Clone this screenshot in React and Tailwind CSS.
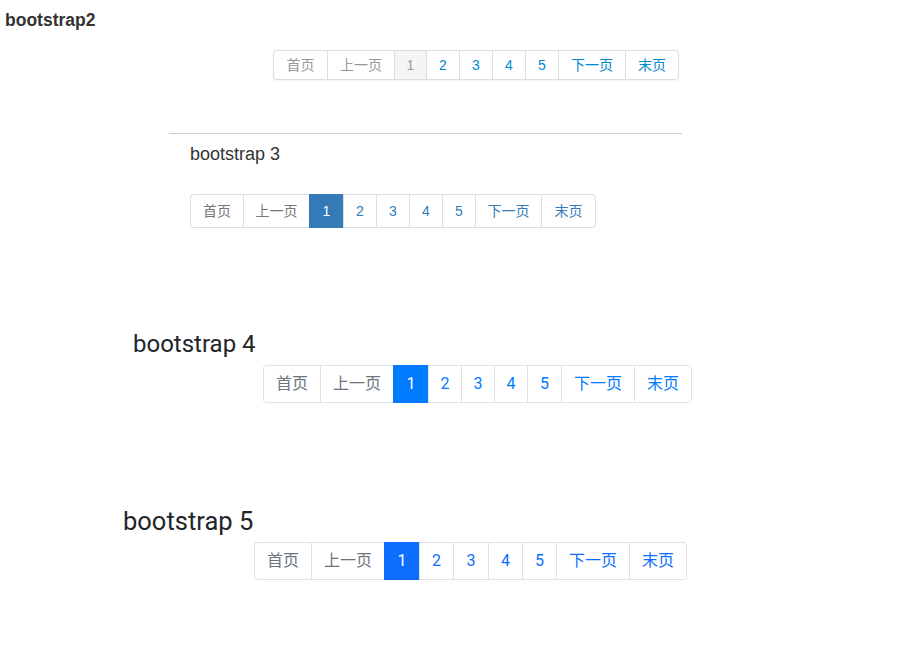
import React from "react";

const bs2 = [
  { t: "首页", w: "w-[54px]", c: "text-[#999999]" },
  { t: "上一页", w: "w-[67px]", c: "text-[#999999]" },
  { t: "1", w: "w-[32px]", c: "text-[#999999] bg-[#f5f5f5]" },
  { t: "2", w: "w-[33px]", c: "text-[#0088cc]" },
  { t: "3", w: "w-[33px]", c: "text-[#0088cc]" },
  { t: "4", w: "w-[33px]", c: "text-[#0088cc]" },
  { t: "5", w: "w-[33px]", c: "text-[#0088cc]" },
  { t: "下一页", w: "w-[67px]", c: "text-[#0088cc]" },
  { t: "末页", w: "w-[54px]", c: "text-[#0088cc]" },
];

const bs3 = [
  { t: "首页", w: "w-[53px]", c: "text-[#777777]" },
  { t: "上一页", w: "w-[66px]", c: "text-[#777777]" },
  { t: "1", w: "w-[34px]", c: "text-white bg-[#337ab7] !border-[#337ab7]" },
  { t: "2", w: "w-[33px]", c: "text-[#337ab7]" },
  { t: "3", w: "w-[33px]", c: "text-[#337ab7]" },
  { t: "4", w: "w-[33px]", c: "text-[#337ab7]" },
  { t: "5", w: "w-[33px]", c: "text-[#337ab7]" },
  { t: "下一页", w: "w-[66px]", c: "text-[#337ab7]" },
  { t: "末页", w: "w-[55px]", c: "text-[#337ab7]" },
];

const bs4 = [
  { t: "首页", w: "w-[57px]", c: "text-[#6c757d]" },
  { t: "上一页", w: "w-[73px]", c: "text-[#6c757d]" },
  { t: "1", w: "w-[35px]", c: "text-white bg-[#007bff] !border-[#007bff]" },
  { t: "2", w: "w-[33px]", c: "text-[#007bff]" },
  { t: "3", w: "w-[33px]", c: "text-[#007bff]" },
  { t: "4", w: "w-[33px]", c: "text-[#007bff]" },
  { t: "5", w: "w-[34px]", c: "text-[#007bff]" },
  { t: "下一页", w: "w-[73px]", c: "text-[#007bff]" },
  { t: "末页", w: "w-[58px]", c: "text-[#007bff]" },
];

const bs5 = [
  { t: "首页", w: "w-[57px]", c: "text-[#6c757d]" },
  { t: "上一页", w: "w-[73px]", c: "text-[#6c757d]" },
  { t: "1", w: "w-[35px]", c: "text-white bg-[#0d6efd] !border-[#0d6efd]" },
  { t: "2", w: "w-[34px]", c: "text-[#0d6efd]" },
  { t: "3", w: "w-[35px]", c: "text-[#0d6efd]" },
  { t: "4", w: "w-[34px]", c: "text-[#0d6efd]" },
  { t: "5", w: "w-[34px]", c: "text-[#0d6efd]" },
  { t: "下一页", w: "w-[73px]", c: "text-[#0d6efd]" },
  { t: "末页", w: "w-[58px]", c: "text-[#0d6efd]" },
];

function Pager({ items, className, cell }) {
  return (
    <ul className={"flex w-fit " + className}>
      {items.map((it, i) => (
        <li
          key={i}
          className={
            "flex items-center justify-center border-y border-l " +
            cell +
            " " +
            it.w +
            " " +
            it.c +
            (i === 0 ? " rounded-l-[4px]" : "") +
            (i === items.length - 1 ? " border-r rounded-r-[4px]" : "")
          }
        >
          {it.t}
        </li>
      ))}
    </ul>
  );
}

export default function App() {
  return (
    <div className="min-h-[664px] w-[909px] bg-white text-[#333333] font-['Liberation_Sans','Noto_Sans_CJK_SC',sans-serif]">
      {/* bootstrap 2 */}
      <div className="pl-[5px] pt-[10px] text-[17.5px] font-bold leading-[20px]">
        bootstrap2
      </div>
      <Pager
        items={bs2}
        className="ml-[273px] mt-[20px] rounded-[4px] shadow-[0_1px_2px_rgba(0,0,0,0.05)]"
        cell="h-[30px] border-[#dddddd] text-[14px] leading-[20px]"
      />

      {/* bootstrap 3 */}
      <hr className="ml-[169px] mt-[53px] w-[513px] border-t border-[#cccccc]" />
      <div className="ml-[190px] mt-[7px] text-[18px] leading-[26px]">
        bootstrap 3
      </div>
      <Pager
        items={bs3}
        className="ml-[190px] mt-[27px]"
        cell="h-[34px] border-[#dddddd] text-[14px] leading-[20px]"
      />

      {/* bootstrap 4 */}
      <div className="font-['Roboto','Noto_Sans_CJK_SC',sans-serif] text-[#212529]">
        <div className="ml-[133px] mt-[102px] text-[24px] leading-[29px]">
          bootstrap 4
        </div>
        <Pager
          items={bs4}
          className="ml-[263px] mt-[6px]"
          cell="h-[38px] border-[#dee2e6] text-[16px] leading-[20px]"
        />

        {/* bootstrap 5 */}
        <div className="ml-[123px] mt-[103px] text-[25.5px] leading-[30px]">
          bootstrap 5
        </div>
        <Pager
          items={bs5}
          className="ml-[254px] mt-[6px]"
          cell="h-[38px] border-[#dee2e6] text-[16px] leading-[24px]"
        />
      </div>
    </div>
  );
}
